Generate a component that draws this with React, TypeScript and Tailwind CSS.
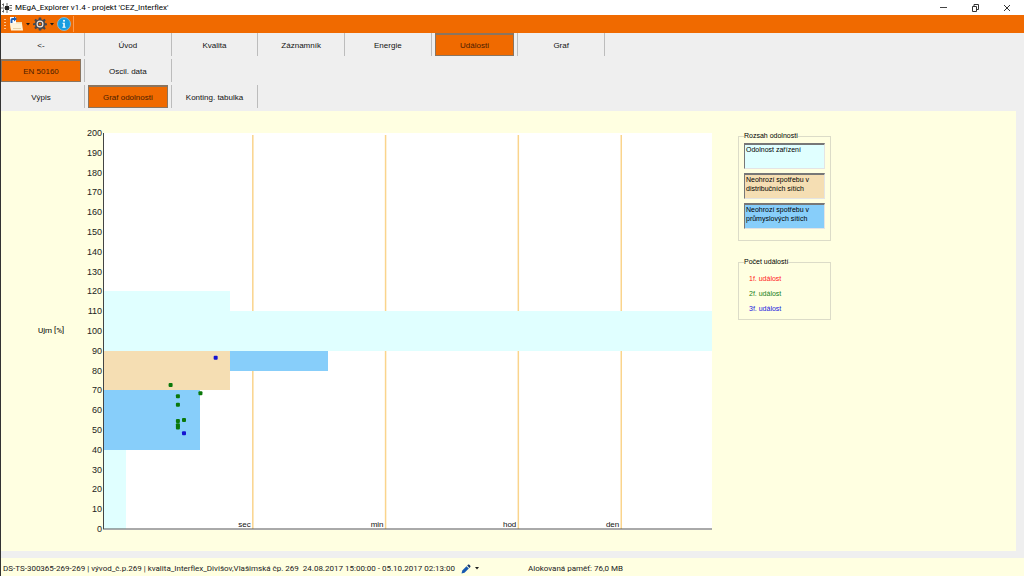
import clsx from "clsx";

interface Tab {
  label: string;
  active?: boolean;
}

interface Zone {
  from: number;
  to: number;
  top: number;
  bottom: number;
  fill: string;
}

// Horizontal positions are in percent of the plot width, vertical ones in percent of voltage
const AXIS_MAX = 200;
const PLOT_HEIGHT = 396;
const LABELS = Array.from({ length: 21 }, (_, i) => AXIS_MAX - i * 10);

const TAB_ROWS: Tab[][] = [
  [
    { label: "<-" },
    { label: "Úvod" },
    { label: "Kvalita" },
    { label: "Záznamník" },
    { label: "Energie" },
    { label: "Události", active: true },
    { label: "Graf" },
  ],
  [{ label: "EN 50160", active: true }, { label: "Oscil. data" }],
  [
    { label: "Výpis" },
    { label: "Graf odolnosti", active: true },
    { label: "Konting. tabulka" },
  ],
];

const TIME_MARKS = [
  { label: "sec", x: 24.6 },
  { label: "min", x: 46.4 },
  { label: "hod", x: 68.2 },
  { label: "den", x: 85.1 },
];

const ZONES: Zone[] = [
  { from: 0, to: 20.9, top: 120, bottom: 90, fill: "#e0ffff" },
  { from: 20.9, to: 100, top: 110, bottom: 90, fill: "#e0ffff" },
  { from: 0, to: 20.9, top: 90, bottom: 70, fill: "#f5deb3" },
  { from: 20.9, to: 36.9, top: 90, bottom: 80, fill: "#87cefa" },
  { from: 0, to: 16, top: 70, bottom: 40, fill: "#87cefa" },
  { from: 0, to: 3.8, top: 40, bottom: 0, fill: "#e0ffff" },
];

const EVENTS = [
  { x: 18.5, u: 86.5, color: "#1414d2" },
  { x: 11.1, u: 72.7, color: "#0a780a" },
  { x: 16, u: 68.5, color: "#0a780a" },
  { x: 12.3, u: 67, color: "#0a780a" },
  { x: 12.3, u: 62.8, color: "#0a780a" },
  { x: 13.3, u: 55, color: "#0a780a" },
  { x: 12.3, u: 54.5, color: "#0a780a" },
  { x: 12.3, u: 52.4, color: "#0a780a" },
  { x: 12.3, u: 51.3, color: "#0a780a" },
  { x: 13.3, u: 48.3, color: "#1414d2" },
];

const RANGES = [
  { text: "Odolnost zařízení", className: "bg-[#e0ffff]" },
  { text: "Neohrozí spotřebu v distribučních sítích", className: "bg-[#f5deb3]" },
  { text: "Neohrozí spotřebu v průmyslových sítích", className: "bg-[#87cefa]" },
];

const toY = (value: number) => PLOT_HEIGHT - (value * PLOT_HEIGHT) / AXIS_MAX;

function TitleBar() {
  return (
    <header className="flex h-[15px] items-center bg-white text-black">
      <svg viewBox="0 0 12 12" className="h-3 w-3" fill="none" stroke="#666" strokeWidth="1">
        <path d="M2.500 1.500v3M2.500 7.500v3M0 6h4M1 2.500h2M1 9.500h2M6 1v3M6 8v3M8.500 3.500h2.500M8.500 8.500h2.500M8 6h3" />
        <rect x="4" y="4" width="4" height="4" fill="#222" stroke="none" />
      </svg>
      <h1 className="ml-0.5 flex-1 font-[Roboto,sans-serif] text-[8px] leading-3">
        MEgA_Explorer v1.4 - projekt 'CEZ_Interflex'
      </h1>
      <div className="flex items-center gap-5 pr-[11px]">
        <button type="button" aria-label="Minimalizovat" className="h-3 w-3">
          <svg viewBox="0 0 12 12" className="h-3 w-3" stroke="#444">
            <path d="M3 5.500h7" />
          </svg>
        </button>
        <button type="button" aria-label="Obnovit" className="h-3 w-3">
          <svg viewBox="0 0 12 12" className="h-3 w-3" fill="none" stroke="#333">
            <path d="M3.500 4.500h4v5h-4zM5 4V2.500h4.500v5H8" />
          </svg>
        </button>
        <button type="button" aria-label="Zavřít" className="h-3 w-3">
          <svg viewBox="0 0 12 12" className="h-3 w-3" stroke="#333">
            <path d="M3 3l6 6M9 3l-6 6" />
          </svg>
        </button>
      </div>
    </header>
  );
}

function Caret() {
  return (
    <svg viewBox="0 0 4 3" className="h-[3px] w-1" fill="#1c1c1c">
      <path d="M0 0h4L2 2.500z" />
    </svg>
  );
}

function Toolbar() {
  return (
    <div className="flex h-[18px] items-center bg-[#f06a00] pl-[3px]">
      <svg viewBox="0 0 3 14" className="h-3.5 w-[3px]" fill="#ffc48f">
        <path d="M0 2h2v1H0zM0 5h2v1H0zM0 8h2v1H0zM0 11h2v1H0z" />
      </svg>
      <button type="button" aria-label="Otevřít" className="ml-px flex items-center gap-0.5">
        <svg viewBox="0 0 16 16" className="h-4 w-4">
          <path d="M2 6h12v8H3z" fill="#f0dcb4" />
          <path d="M2 7.500h12l1 7H3z" fill="#fff3d9" />
          <path d="M5 12.500h8" stroke="#e0c89b" strokeWidth="0.800" />
          <path d="M2 1h6v6.500H2z" fill="#fff" />
          <path d="M2.500 7V4Q2.500 2 4.500 2H6V0.300L9 3 6 5.500V4H4.500v3z" fill="#1f5fb4" />
        </svg>
        <Caret />
      </button>
      <button type="button" aria-label="Nastavení" className="ml-[3px] flex items-center gap-[3px]">
        <svg viewBox="0 0 24 24" className="h-3.5 w-3.5">
          <path
            d="M10 1h4l.6 3.200 2.200.9L19.500 3.200l2.300 2.300-1.900 2.700.9 2.200 3.200.6v3l-3.200.6-.9 2.200 1.900 2.700-2.300 2.300-2.700-1.900-2.200.9L14 23h-4l-.6-3.200-2.200-.9-2.700 1.900-2.300-2.300 1.900-2.700-.9-2.200L0 14v-3l3.200-.6.9-2.200-1.900-2.700 2.300-2.300 2.700 1.900 2.200-.9z"
            fill="#46484e"
          />
          <circle cx="12" cy="12" r="6" fill="#f3e5da" />
          <circle cx="12" cy="12" r="4" fill="#46484e" />
          <circle cx="12" cy="12" r="2.200" fill="#f06a00" />
        </svg>
        <Caret />
      </button>
      <button type="button" aria-label="Informace" className="ml-[3px]">
        <svg viewBox="0 0 14 14" className="h-3.5 w-3.5">
          <circle cx="7" cy="7" r="6.500" fill="#189de0" stroke="#8fcdf0" strokeWidth="0.700" />
          <circle cx="7" cy="3.800" r="1" fill="#fff" />
          <path d="M5.500 5.800h2.300v4h.9v1H5.400v-1h.9v-3h-.8z" fill="#fff" />
        </svg>
      </button>
      <div className="ml-0.5 h-4 w-px bg-[#ff9a4d]" />
    </div>
  );
}

function TabRow({ tabs }: { tabs: Tab[] }) {
  return (
    <div className="grid h-[26px] w-[604px] grid-cols-[84px_repeat(6,1fr)] items-start">
      {tabs.map((tab) => (
        <div key={tab.label} className="h-[23px] border-r border-[#bcbcbc] px-[3px] first:pl-0">
          <button
            type="button"
            className={clsx(
              "block h-full w-full pt-0.5 text-[8px] leading-[10px]",
              tab.active
                ? "border border-t-2 border-[#8a7560] bg-[#f06a00] text-[#4a1c00]"
                : "text-[#111]"
            )}
          >
            {tab.label}
          </button>
        </div>
      ))}
    </div>
  );
}

function AxisLabels() {
  return (
    <svg className="h-[397px] w-10 overflow-visible" fontSize="9" fill="#222" textAnchor="end">
      {LABELS.map((value) => (
        <text key={value} x="39" y={toY(value) + 3}>
          {value}
        </text>
      ))}
    </svg>
  );
}

function Plot() {
  return (
    <svg className="h-[397px] min-w-0 flex-1 overflow-visible bg-white" role="img" aria-label="Graf odolnosti">
      {TIME_MARKS.map((mark) => (
        <line
          key={mark.label}
          x1={`${mark.x}%`}
          x2={`${mark.x}%`}
          y1="2"
          y2={PLOT_HEIGHT}
          stroke="#fad48c"
          strokeWidth="1.500"
        />
      ))}
      {ZONES.map((zone) => (
        <rect
          key={`${zone.from}-${zone.top}`}
          x={`${zone.from}%`}
          y={toY(zone.top)}
          width={`${zone.to - zone.from}%`}
          height={toY(zone.bottom) - toY(zone.top)}
          fill={zone.fill}
          shapeRendering="crispEdges"
        />
      ))}
      {TIME_MARKS.map((mark) => (
        <text key={mark.label} x={`${mark.x}%`} dx="-2" y="394" textAnchor="end" fontSize="8" fill="#111">
          {mark.label}
        </text>
      ))}
      {EVENTS.map((event, i) => (
        <rect
          key={i}
          x={`${event.x}%`}
          y={toY(event.u) - 2}
          width="4"
          height="4"
          rx="1"
          transform="translate(-2 0)"
          fill={event.color}
        />
      ))}
      <path d={`M0.500 0V${PLOT_HEIGHT}`} stroke="#444" />
      <line x1="0" x2="100%" y1="396" y2="396" stroke="#555" />
    </svg>
  );
}

function Legend() {
  return (
    <aside className="w-[93px] text-[7px]">
      <fieldset className="h-[110px] border border-[#dcdcc8] px-[5px]">
        <legend className="leading-[10px]">Rozsah odolnosti</legend>
        <div className="flex flex-col gap-1 pt-0.5">
          {RANGES.map((range) => (
            <textarea
              key={range.text}
              aria-label={range.text}
              defaultValue={range.text}
              readOnly
              className={clsx(
                "block h-[26px] w-full resize-none overflow-hidden border border-t-2 border-t-[#777] border-r-[#e4e4e4] border-b-[#e4e4e4] border-l-[#777] pl-px leading-[9px]",
                range.className
              )}
            />
          ))}
        </div>
      </fieldset>
      <fieldset className="mt-4 h-[63px] border border-[#dcdcc8] px-[5px]">
        <legend className="leading-[10px]">Počet událostí</legend>
        <ul className="pt-1 pl-[5px] leading-[15px]">
          <li className="text-[#ff2020]">1f. událost</li>
          <li className="text-[#208020]">2f. událost</li>
          <li className="text-[#2020e0]">3f. událost</li>
        </ul>
      </fieldset>
    </aside>
  );
}

function StatusBar() {
  return (
    <footer className="flex flex-1 items-center bg-[#ffffe1] pt-[3px] pl-0.5 font-[Roboto,sans-serif] text-[8px] text-[#222]">
      <div className="flex w-[525px] items-center whitespace-pre">
        <span>DS-TS-300365-269-269 | vývod_č.p.269 | kvalita_Interflex_Divišov,Vlašimská čp. 269  24.08.2017 15:00:00 - 05.10.2017 02:13:00</span>
        <button type="button" aria-label="Upravit" className="ml-1.5 flex items-center gap-1">
          <svg viewBox="0 0 10 10" className="h-2.5 w-2.5">
            <path d="M0.500 9.500L1.300 6.500 5.500 2.300 7.800 4.600 3.500 8.800z" fill="#1759b0" />
            <path d="M6.200 1.600L7.200 0.600Q7.800 0.200 8.400 0.800L9.300 1.700Q9.800 2.300 9.300 2.900L8.400 3.900z" fill="#17386e" />
          </svg>
          <Caret />
        </button>
      </div>
      <span>Alokovaná paměť: 76,0 MB</span>
    </footer>
  );
}

function App() {
  return (
    <div className="flex min-h-screen flex-col border-l border-[#333] bg-[#efefef] font-['Liberation_Sans',sans-serif] text-black">
      <TitleBar />
      <Toolbar />
      <nav>
        {TAB_ROWS.map((tabs) => (
          <TabRow key={tabs[0].label} tabs={tabs} />
        ))}
      </nav>
      <main className="mr-2 flex h-[440px] items-start bg-[#ffffe1] pt-[22px] pr-[185px]">
        <div className="mt-[193px] w-[62px] pl-[37px] font-[Roboto,sans-serif] text-[8px] leading-[10px] whitespace-nowrap">
          Ujm [%]
        </div>
        <AxisLabels />
        <Plot />
        <div className="-mt-0.5 ml-[26px]">
          <Legend />
        </div>
      </main>
      <div className="h-[7px]" />
      <StatusBar />
    </div>
  );
}

export default App;
